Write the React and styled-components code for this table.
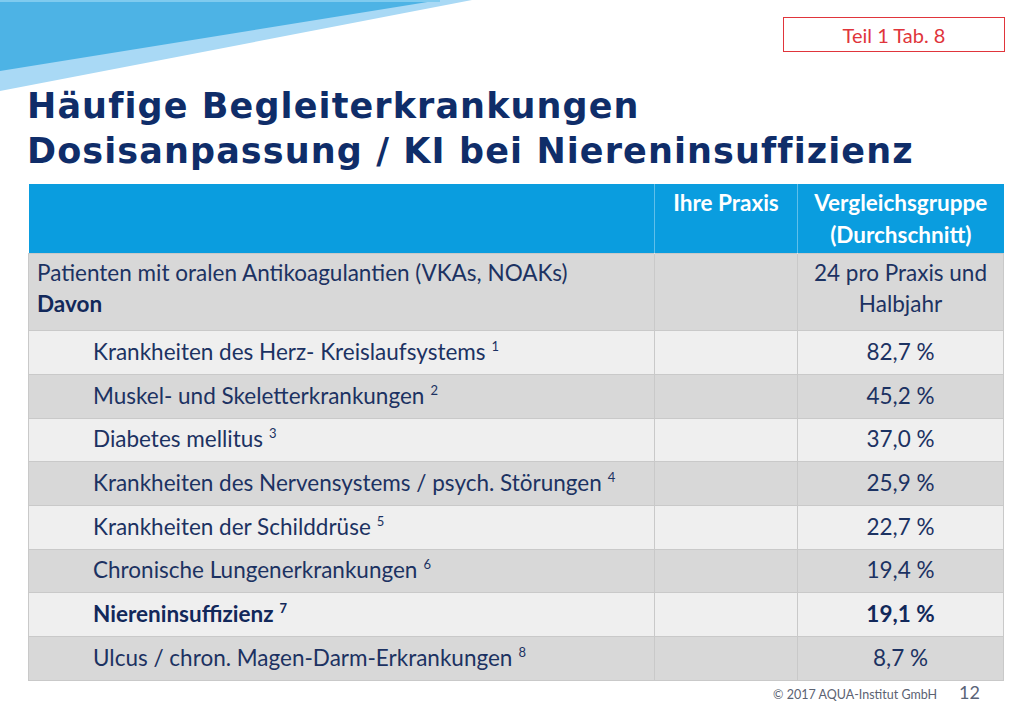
import React from "react";
import styled, { createGlobalStyle } from "styled-components";

const GlobalStyle = createGlobalStyle`
  html, body {
    margin: 0;
    padding: 0;
    background: #ffffff;
  }
`

const Slide = styled.div`
  width: 1024px;
  height: 717px;
  overflow: hidden;
  background: #ffffff;
  font-family: Lato, "Open Sans", sans-serif;
  color: #1c3262;
  display: flex;
  flex-direction: column;
`
const TopBar = styled.div`
  height: 84px;
  display: flex;
  flex-direction: row;
  justify-content: space-between;
  align-items: flex-start;
`
const Swoosh = styled.svg`
  display: block;
  overflow: visible;
`
const TagBox = styled.div`
  margin-top: 17px;
  margin-right: 19px;
  width: 220px;
  height: 33px;
  border: 1px solid #e0353b;
  color: #e0353b;
  font-size: 20px;
  display: flex;
  align-items: center;
  justify-content: center;
`
const Title = styled.h1`
  margin: 0;
  padding-left: 27px;
  font-family: "DejaVu Sans", Verdana, sans-serif;
  font-weight: bold;
  font-size: 35px;
  letter-spacing: 1.1px;
  line-height: 45px;
  color: #0f2d69;
  height: 100px;
`
const Table = styled.table`
  margin-left: 28px;
  width: 975px;
  border-collapse: collapse;
  table-layout: fixed;
  font-size: 22.5px;
`
const HeadRow = styled.tr`
  height: 69px;
`
const HeadCell = styled.th`
  background: #0a9ddf;
  color: #ffffff;
  font-weight: bold;
  vertical-align: top;
  text-align: center;
  line-height: 32px;
  padding: 3px 4px 0;
  border-left: 1px solid rgba(255, 255, 255, 0.35);
  &:first-child {
    border-left: none;
  }
`
const Row = styled.tr`
  height: ${p => p.$h}px;
  background: ${p => (p.$shade ? "#d8d8d8" : "#efefef")};
`
const Cell = styled.td`
  border: 1px solid #c9c9c9;
  padding: ${p => (p.$tall ? "3px 8px 0" : "0 8px 2px")};
  padding-left: ${p => (p.$indent ? "64px" : "8px")};
  vertical-align: ${p => (p.$tall ? "top" : "middle")};
  text-align: ${p => (p.$center ? "center" : "left")};
  line-height: 31px;
  font-weight: ${p => (p.$bold ? "bold" : "normal")};
  color: ${p => (p.$bold ? "#12285a" : "#1c3262")};
  white-space: nowrap;
`
const Sup = styled.sup`
  font-size: 13px;
  vertical-align: 9px;
  line-height: 0;
  margin-left: 6px;
`
const Strong = styled.span`
  font-weight: bold;
  color: #12285a;
`
const Footer = styled.div`
  display: flex;
  justify-content: flex-end;
  align-items: baseline;
  gap: 22px;
  padding: 0 44px 0 0;
  color: #5b6272;
`
const Copy = styled.span`
  font-size: 12.5px;
`
const PageNo = styled.span`
  font-size: 18px;
  color: #5a6478;
`

const rows = [
  { label: "Krankheiten des Herz- Kreislaufsystems", n: 1, value: "82,7 %", h: 44 },
  { label: "Muskel- und Skeletterkrankungen", n: 2, value: "45,2 %", h: 44 },
  { label: "Diabetes mellitus", n: 3, value: "37,0 %", h: 43 },
  { label: "Krankheiten des Nervensystems / psych. Störungen", n: 4, value: "25,9 %", h: 44 },
  { label: "Krankheiten der Schilddrüse", n: 5, value: "22,7 %", h: 44 },
  { label: "Chronische Lungenerkrankungen", n: 6, value: "19,4 %", h: 43 },
  { label: "Niereninsuffizienz", n: 7, value: "19,1 %", h: 44, bold: true },
  { label: "Ulcus / chron. Magen-Darm-Erkrankungen", n: 8, value: "8,7 %", h: 44 },
]

export default function App() {
  return (
    <Slide>
      <GlobalStyle />
      <TopBar>
        <Swoosh width="472" height="92" viewBox="0 0 472 92">
          <polygon points="0,0 472,0 0,91" fill="#a9d9f5" />
          <polygon points="0,0 440,0 0,71" fill="#4db3e5" />
          <rect x="0" y="0" width="440" height="2" fill="#7fcbef" />
        </Swoosh>
        <TagBox>Teil 1 Tab. 8</TagBox>
      </TopBar>

      <Title>
        Häufige Begleiterkrankungen
        <br />
        Dosisanpassung / KI bei Niereninsuffizienz
      </Title>

      <Table>
        <colgroup>
          <col style={{ width: 626 }} />
          <col style={{ width: 143 }} />
          <col style={{ width: 206 }} />
        </colgroup>
        <thead>
          <HeadRow>
            <HeadCell></HeadCell>
            <HeadCell>Ihre Praxis</HeadCell>
            <HeadCell>
              Vergleichsgruppe
              <br />
              (Durchschnitt)
            </HeadCell>
          </HeadRow>
        </thead>
        <tbody>
          <Row $shade $h={77}>
            <Cell $tall>
              Patienten mit oralen Antikoagulantien (VKAs, NOAKs)
              <br />
              <Strong>Davon</Strong>
            </Cell>
            <Cell $tall></Cell>
            <Cell $tall $center>
              24 pro Praxis und
              <br />
              Halbjahr
            </Cell>
          </Row>
          {rows.map((r, i) => (
            <Row key={r.n} $shade={i % 2 === 1} $h={r.h}>
              <Cell $indent $bold={r.bold}>
                {r.label}
                <Sup>{r.n}</Sup>
              </Cell>
              <Cell></Cell>
              <Cell $center $bold={r.bold}>{r.value}</Cell>
            </Row>
          ))}
        </tbody>
      </Table>

      <Footer>
        <Copy>© 2017 AQUA-Institut GmbH</Copy>
        <PageNo>12</PageNo>
      </Footer>
    </Slide>
  )
}
